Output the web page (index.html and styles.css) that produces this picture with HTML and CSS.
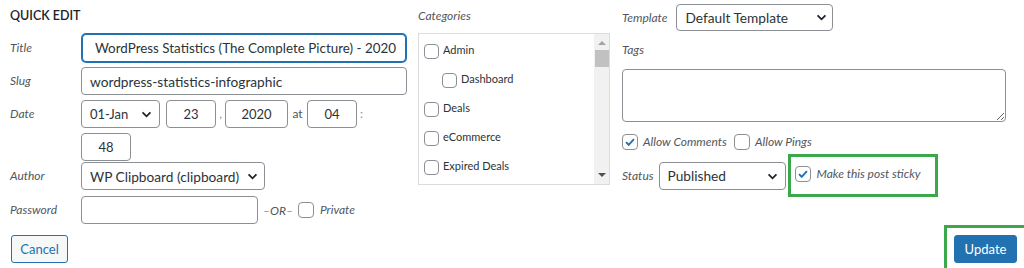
FILE: index.html
```html
<!DOCTYPE html>
<html lang="en">
<head>
    <meta charset="UTF-8">
    <meta name="viewport" content="width=device-width, initial-scale=1.0">
    <title>Quick Edit</title>
    <link rel="stylesheet" href="styles.css">
</head>
<body>
    <div class="quick-edit">
        <div class="columns">
            <div class="col col-left">
                <h2 class="legend">Quick Edit</h2>
                <div class="field">
                    <span class="label">Title</span>
                    <input type="text" class="text title-input" value="WordPress Statistics (The Complete Picture) - 2020">
                </div>
                <div class="field">
                    <span class="label">Slug</span>
                    <input type="text" class="text wide" value="wordpress-statistics-infographic">
                </div>
                <div class="field field-date">
                    <span class="label">Date</span>
                    <div class="date-wrap">
                        <div class="select month">
                            <select><option>01-Jan</option></select>
                            <svg class="chevron" viewBox="0 0 12 8"><path d="M1.5 1.5l4.5 4.5 4.5-4.5"/></svg>
                        </div>
                        <input type="text" class="text num day" value="23">
                        <span class="sep">,</span>
                        <input type="text" class="text num year" value="2020">
                        <span class="sep sep-at">at</span>
                        <input type="text" class="text num" value="04">
                        <span class="sep sep-colon">:</span>
                        <input type="text" class="text num" value="48">
                    </div>
                </div>
                <div class="field">
                    <span class="label">Author</span>
                    <div class="select author">
                        <select><option>WP Clipboard (clipboard)</option></select>
                        <svg class="chevron" viewBox="0 0 12 8"><path d="M1.5 1.5l4.5 4.5 4.5-4.5"/></svg>
                    </div>
                </div>
                <div class="field field-password">
                    <span class="label">Password</span>
                    <input type="text" class="text password">
                    <span class="or">&ndash;OR&ndash;</span>
                    <label class="check">
                        <span class="box"></span>
                        <span class="check-text">Private</span>
                    </label>
                </div>
            </div>

            <div class="col col-mid">
                <span class="label">Categories</span>
                <div class="cat-box">
                    <ul class="cat-list">
                        <li><span class="box"></span>Admin</li>
                        <li class="child"><span class="box"></span>Dashboard</li>
                        <li><span class="box"></span>Deals</li>
                        <li><span class="box"></span>eCommerce</li>
                        <li><span class="box"></span>Expired Deals</li>
                    </ul>
                    <div class="scrollbar">
                        <span class="arrow up"></span>
                        <span class="thumb"></span>
                        <span class="arrow down"></span>
                    </div>
                </div>
            </div>

            <div class="col col-right">
                <div class="row">
                    <span class="label">Template</span>
                    <div class="select template">
                        <select><option>Default Template</option></select>
                        <svg class="chevron" viewBox="0 0 12 8"><path d="M1.5 1.5l4.5 4.5 4.5-4.5"/></svg>
                    </div>
                </div>
                <span class="label tags-label">Tags</span>
                <textarea class="tags"></textarea>
                <div class="row allow-row">
                    <label class="check">
                        <span class="box checked"><svg viewBox="0 0 16 16"><path d="M3.5 8.2l3 3 6-6.4"/></svg></span>
                        <span class="check-text">Allow Comments</span>
                    </label>
                    <label class="check">
                        <span class="box"></span>
                        <span class="check-text">Allow Pings</span>
                    </label>
                </div>
                <div class="row status-row">
                    <span class="label">Status</span>
                    <div class="select status">
                        <select><option>Published</option></select>
                        <svg class="chevron" viewBox="0 0 12 8"><path d="M1.5 1.5l4.5 4.5 4.5-4.5"/></svg>
                    </div>
                    <label class="check sticky">
                        <span class="box checked"><svg viewBox="0 0 16 16"><path d="M3.5 8.2l3 3 6-6.4"/></svg></span>
                        <span class="check-text">Make this post sticky</span>
                    </label>
                </div>
            </div>
        </div>

        <div class="actions">
            <button type="button" class="btn cancel">Cancel</button>
            <div class="update-wrap">
                <button type="button" class="btn update">Update</button>
            </div>
        </div>
    </div>
</body>
</html>
```

FILE: styles.css
```css
body {
    margin: 0;
    font-family: Lato, 'Open Sans', sans-serif;
    color: #2c3338;
    background: #ffffff;
    overflow: hidden;
}
.quick-edit {
    width: 1024px;
    height: 268px;
    padding: 0 10px;
    box-sizing: border-box;
}
.columns {
    display: grid;
    grid-template-columns: 408px 204px 384px;
}
.col {
    display: flex;
    flex-direction: column;
}
.label {
    font-size: 12px;
    font-style: italic;
    color: #50575e;
    line-height: 16px;
}

/* left column */
.legend {
    margin: 8px 0 10px;
    font-size: 12.5px;
    font-weight: 600;
    line-height: 16px;
    text-transform: uppercase;
    color: #1d2327;
}
.field {
    display: flex;
    align-items: center;
    margin-bottom: 5px;
}
.field .label {
    width: 71px;
    flex: none;
}
.field-date {
    align-items: flex-start;
    margin-bottom: 1px;
}
.field-date .label {
    margin-top: 6px;
}
.field-password {
    margin-top: 1px;
    margin-bottom: 0;
}
.text {
    height: 28px;
    box-sizing: border-box;
    border: 1px solid #8c8f94;
    border-radius: 4px;
    padding: 0 8px;
    font-family: inherit;
    font-size: 13.7px;
    color: #2c3338;
    background: #fff;
    outline: none;
}
.wide {
    width: 326px;
}
.title-input {
    width: 324px;
    margin-left: 1px;
    padding-left: 12px;
    font-size: 13.4px;
    border-color: #2271b1;
    box-shadow: 0 0 0 1px #2271b1;
}
.date-wrap {
    width: 326px;
    display: flex;
    flex-wrap: wrap;
    row-gap: 5px;
}
.num {
    width: 50px;
    padding: 0;
    text-align: center;
    font-size: 13px;
}
.year {
    width: 63px;
}
.month {
    margin-right: 6px;
}
.sep {
    width: 9px;
    line-height: 28px;
    font-size: 12px;
    color: #8c8f94;
    text-align: center;
}
.sep-at {
    width: 19px;
    color: #50575e;
}
.sep-colon {
    width: 12px;
    text-align: left;
    padding-left: 3px;
    box-sizing: border-box;
}
.password {
    width: 177px;
}
.or {
    margin: 0 5px;
    font-size: 12px;
    font-style: italic;
    color: #50575e;
}

/* selects */
.select {
    position: relative;
    display: inline-flex;
}
.select select {
    appearance: none;
    -webkit-appearance: none;
    height: 28px;
    border: 1px solid #8c8f94;
    border-radius: 4px;
    padding: 0 24px 0 8px;
    font-family: inherit;
    font-size: 13.7px;
    color: #2c3338;
    background: #fff;
    outline: none;
}
.select .chevron {
    position: absolute;
    right: 8px;
    top: 11px;
    width: 11px;
    height: 7px;
    fill: none;
    stroke: #1d2327;
    stroke-width: 2;
    pointer-events: none;
}
.month select {
    width: 79px;
    font-size: 13px;
}
.author select {
    width: 184px;
    padding-right: 16px;
}
.author .chevron {
    right: 7px;
}
.template select {
    width: 157px;
    height: 27px;
}
.template .chevron {
    right: 6px;
    top: 10px;
}
.status select {
    width: 127px;
}

/* checkboxes */
.check {
    display: inline-flex;
    align-items: center;
}
.box {
    width: 16px;
    height: 16px;
    box-sizing: border-box;
    border: 1px solid #8c8f94;
    border-radius: 4px;
    background: #fff;
    flex: none;
    display: inline-flex;
}
.box svg {
    width: 14px;
    height: 14px;
    fill: none;
    stroke: #2271b1;
    stroke-width: 2.2;
}
.check-text {
    margin-left: 6px;
    font-size: 12px;
    font-style: italic;
    color: #50575e;
    line-height: 16px;
}

/* middle column */
.col-mid {
    padding-top: 8px;
}
.cat-box {
    margin-top: 9px;
    width: 192px;
    height: 152px;
    box-sizing: border-box;
    border: 1px solid #dcdcde;
    display: flex;
    overflow: hidden;
}
.cat-list {
    list-style: none;
    margin: 0;
    padding: 1px 0 0 5px;
    flex: 1;
}
.cat-list li {
    height: 29px;
    display: flex;
    align-items: center;
    font-size: 11px;
    color: #2c3338;
}
.cat-list li .box {
    width: 15px;
    height: 15px;
    margin-right: 4px;
    margin-top: 3px;
}
.cat-list li.child {
    padding-left: 18px;
}
.scrollbar {
    width: 15px;
    background: #f1f1f1;
    display: flex;
    flex-direction: column;
    align-items: center;
}
.arrow {
    width: 0;
    height: 0;
    border-left: 4px solid transparent;
    border-right: 4px solid transparent;
}
.arrow.up {
    margin: 7px 0 5px;
    border-bottom: 4px solid #a3a3a3;
}
.arrow.down {
    margin: auto 0 7px;
    border-top: 4px solid #505050;
}
.thumb {
    width: 14px;
    height: 17px;
    background: #c1c1c1;
}

/* right column */
.col-right {
    padding-top: 4px;
}
.row {
    display: flex;
    align-items: center;
}
.row .label {
    margin-right: 9px;
}
.tags-label {
    margin-top: 11px;
}
.tags {
    margin-top: 11px;
    width: 384px;
    height: 53px;
    box-sizing: border-box;
    border: 1px solid #8c8f94;
    border-radius: 4px;
    outline: none;
    font-family: inherit;
}
.allow-row {
    margin-top: 12px;
}
.allow-row .check-text {
    margin-left: 5px;
}
.allow-row .check + .check {
    margin-left: 7px;
}
.status-row {
    margin-top: 4px;
}
.status-row .label {
    margin-right: 5px;
}
.sticky {
    margin-left: 2px;
    height: 43px;
    width: 150px;
    box-sizing: border-box;
    border: 3px solid #3aa84b;
    padding: 0 0 3px 4px;
}
.sticky .check-text {
    margin-left: 6px;
}

/* buttons */
.actions {
    margin-top: 1px;
    display: flex;
    align-items: center;
    justify-content: space-between;
}
.btn {
    height: 28px;
    border-radius: 3px;
    font-family: inherit;
    font-size: 13px;
    cursor: pointer;
}
.cancel {
    margin-left: 1px;
    width: 57px;
    border: 1px solid #2271b1;
    background: #f6f7f7;
    color: #2271b1;
}
.update-wrap {
    margin-right: -13px;
    border: 3px solid #3aa84b;
    padding: 7px;
}
.update {
    width: 63px;
    border: 1px solid #2271b1;
    background: #2271b1;
    color: #ffffff;
}
```
